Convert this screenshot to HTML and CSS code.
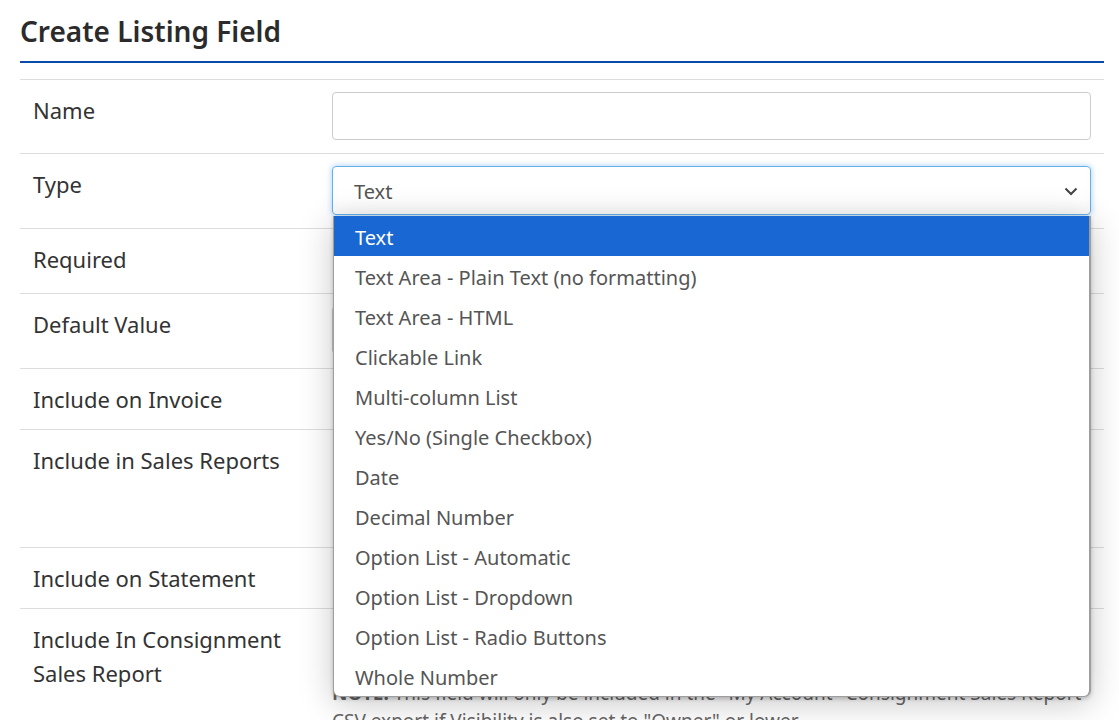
FILE: index.html
```html
<!DOCTYPE html>
<html>
<head>
<meta charset="utf-8">
<link rel="stylesheet" href="styles.css">
</head>
<body>
<div class="page">
  <h1 class="title">Create Listing Field</h1>
  <div class="rule"></div>
  <div class="form">
    <div class="row row-name">
      <div class="label">Name</div>
      <div class="field"><div class="input"></div></div>
    </div>
    <div class="row row-type">
      <div class="label">Type</div>
      <div class="field">
        <div class="select-wrap">
          <div class="select">
            <span>Text</span>
            <svg class="chev" width="14" height="9" viewBox="0 0 14 9"><path d="M1.5 1.5 L7 7 L12.5 1.5" fill="none" stroke="#444" stroke-width="2"/></svg>
          </div>
          <ul class="menu">
            <li class="active">Text</li>
            <li>Text Area - Plain Text (no formatting)</li>
            <li>Text Area - HTML</li>
            <li>Clickable Link</li>
            <li>Multi-column List</li>
            <li>Yes/No (Single Checkbox)</li>
            <li>Date</li>
            <li>Decimal Number</li>
            <li>Option List - Automatic</li>
            <li>Option List - Dropdown</li>
            <li>Option List - Radio Buttons</li>
            <li>Whole Number</li>
          </ul>
        </div>
      </div>
    </div>
    <div class="row row-required">
      <div class="label">Required</div>
      <div class="field"></div>
    </div>
    <div class="row row-default">
      <div class="label">Default Value</div>
      <div class="field"><div class="input"></div></div>
    </div>
    <div class="row row-invoice">
      <div class="label">Include on Invoice</div>
      <div class="field"></div>
    </div>
    <div class="row row-sales">
      <div class="label">Include in Sales Reports</div>
      <div class="field"></div>
    </div>
    <div class="row row-statement">
      <div class="label">Include on Statement</div>
      <div class="field"></div>
    </div>
    <div class="row row-consign">
      <div class="label">Include In Consignment<br>Sales Report</div>
      <div class="field">
        <p class="note"><b>NOTE:</b> This field will only be included in the "My Account" Consignment Sales Report CSV export if Visibility is also set to "Owner" or lower.</p>
      </div>
    </div>
  </div>
</div>
</body>
</html>
```
FILE: styles.css
```css
* { box-sizing: border-box; }
html, body { margin: 0; padding: 0; background: #fff; }
body {
  font-family: "Noto Sans", "Open Sans", sans-serif;
  color: #333;
  overflow: hidden;
  height: 720px;
}
.page {
  padding: 0 15px 0 20px;
}
.title {
  margin: 0;
  padding-top: 13px;
  height: 61px;
  font-size: 28px;
  font-weight: 600;
  line-height: 36px;
  color: #2b2b2b;
}
.rule {
  height: 2px;
  background: #0b4ba8;
  margin-bottom: 16px;
}
.form {
  border-top: 1px solid #ddd;
}
.row {
  display: flex;
  border-bottom: 1px solid #ddd;
}
.label {
  width: 312px;
  flex: none;
  padding: 13px 13px 13px;
  font-size: 22px;
  line-height: 34px;
  color: #333;
}
.field {
  flex: 1;
  padding: 12px 13px 12px 0;
}
.row-name { height: 74px; }
.row-type { height: 75px; }
.row-required { height: 65px; }
.row-default { height: 75px; }
.row-invoice { height: 61px; }
.row-sales { height: 118px; }
.row-statement { height: 61px; }
.row-consign { height: 200px; border-bottom: none; }

.input {
  height: 48px;
  border: 1px solid #ccc;
  border-radius: 4px;
  background: #fff;
}
.select-wrap { position: relative; }
.select {
  height: 49px;
  border: 1px solid #66afe9;
  border-radius: 4px;
  box-shadow: 0 0 6px rgba(102, 175, 233, 0.6), inset 0 -8px 10px rgba(0,0,0,0.025);
  display: flex;
  align-items: center;
  justify-content: space-between;
  padding: 2px 12px 0 21px;
  font-size: 20px;
  color: #555;
}
.chev { display: block; margin-top: 0; }
.menu {
  position: absolute;
  top: 50px;
  left: 1px;
  width: 758px;
  margin: 0;
  padding: 0;
  list-style: none;
  background: #fff;
  border: 1px solid #9e9e9e;
  border-right-width: 2px;
  border-top: none;
  border-radius: 0 0 7px 7px;
  box-shadow: 0 6px 34px rgba(0, 0, 0, 0.22), 0 2px 4px rgba(0,0,0,0.2);
  overflow: hidden;
  z-index: 5;
}
.menu li {
  height: 40px;
  line-height: 37px;
  padding: 3px 0 0 21px;
  font-size: 20px;
  color: #555;
  white-space: nowrap;
}
.menu li.active {
  background: #1967d2;
  color: #fff;
}
.note {
  margin: 0;
  padding-top: 58px;
  font-size: 19px;
  line-height: 28px;
  color: #666;
}
```
